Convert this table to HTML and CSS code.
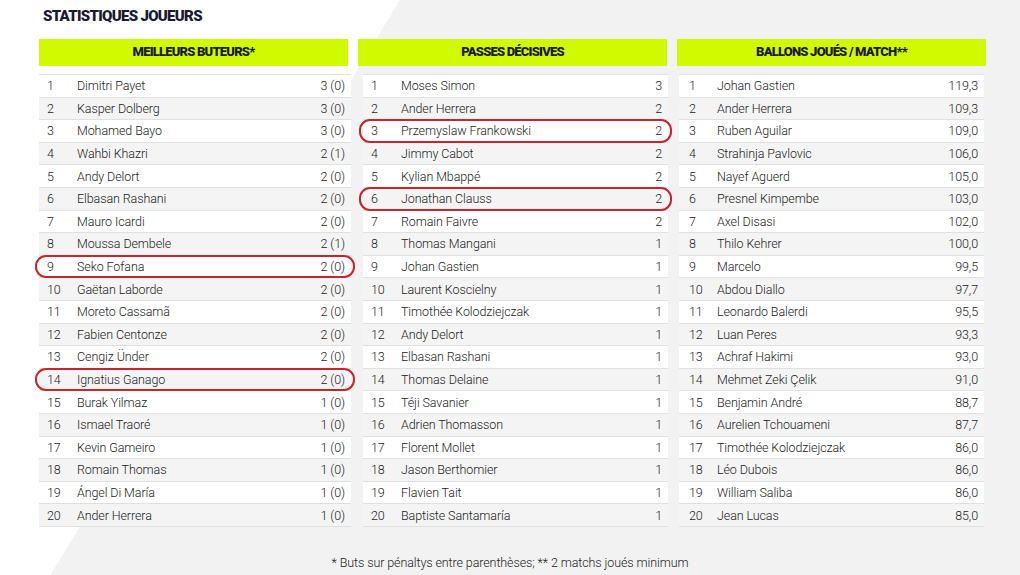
FILE: index.html
```html
<!DOCTYPE html>
<html lang="fr">
<head>
<meta charset="utf-8">
<title>Statistiques joueurs</title>
<link rel="stylesheet" href="styles.css">
</head>
<body>
<div class="page">
  <h1 class="title">STATISTIQUES JOUEURS</h1>
  <div class="tables">
    <section class="col col-1">
      <div class="head">MEILLEURS BUTEURS*</div>
      <ol class="rows">
        <li class="row"><span class="rk">1</span><span class="nm">Dimitri Payet</span><span class="val">3 (0)</span></li>
        <li class="row"><span class="rk">2</span><span class="nm">Kasper Dolberg</span><span class="val">3 (0)</span></li>
        <li class="row"><span class="rk">3</span><span class="nm">Mohamed Bayo</span><span class="val">3 (0)</span></li>
        <li class="row"><span class="rk">4</span><span class="nm">Wahbi Khazri</span><span class="val">2 (1)</span></li>
        <li class="row"><span class="rk">5</span><span class="nm">Andy Delort</span><span class="val">2 (0)</span></li>
        <li class="row"><span class="rk">6</span><span class="nm">Elbasan Rashani</span><span class="val">2 (0)</span></li>
        <li class="row"><span class="rk">7</span><span class="nm">Mauro Icardi</span><span class="val">2 (0)</span></li>
        <li class="row"><span class="rk">8</span><span class="nm">Moussa Dembele</span><span class="val">2 (1)</span></li>
        <li class="row mark"><span class="rk">9</span><span class="nm">Seko Fofana</span><span class="val">2 (0)</span></li>
        <li class="row"><span class="rk">10</span><span class="nm">Gaëtan Laborde</span><span class="val">2 (0)</span></li>
        <li class="row"><span class="rk">11</span><span class="nm">Moreto Cassamã</span><span class="val">2 (0)</span></li>
        <li class="row"><span class="rk">12</span><span class="nm">Fabien Centonze</span><span class="val">2 (0)</span></li>
        <li class="row"><span class="rk">13</span><span class="nm">Cengiz Ünder</span><span class="val">2 (0)</span></li>
        <li class="row mark"><span class="rk">14</span><span class="nm">Ignatius Ganago</span><span class="val">2 (0)</span></li>
        <li class="row"><span class="rk">15</span><span class="nm">Burak Yilmaz</span><span class="val">1 (0)</span></li>
        <li class="row"><span class="rk">16</span><span class="nm">Ismael Traoré</span><span class="val">1 (0)</span></li>
        <li class="row"><span class="rk">17</span><span class="nm">Kevin Gameiro</span><span class="val">1 (0)</span></li>
        <li class="row"><span class="rk">18</span><span class="nm">Romain Thomas</span><span class="val">1 (0)</span></li>
        <li class="row"><span class="rk">19</span><span class="nm">Ángel Di María</span><span class="val">1 (0)</span></li>
        <li class="row"><span class="rk">20</span><span class="nm">Ander Herrera</span><span class="val">1 (0)</span></li>
      </ol>
    </section>
    <section class="col col-2">
      <div class="head">PASSES DÉCISIVES</div>
      <ol class="rows">
        <li class="row"><span class="rk">1</span><span class="nm">Moses Simon</span><span class="val">3</span></li>
        <li class="row"><span class="rk">2</span><span class="nm">Ander Herrera</span><span class="val">2</span></li>
        <li class="row mark"><span class="rk">3</span><span class="nm">Przemyslaw Frankowski</span><span class="val">2</span></li>
        <li class="row"><span class="rk">4</span><span class="nm">Jimmy Cabot</span><span class="val">2</span></li>
        <li class="row"><span class="rk">5</span><span class="nm">Kylian Mbappé</span><span class="val">2</span></li>
        <li class="row mark"><span class="rk">6</span><span class="nm">Jonathan Clauss</span><span class="val">2</span></li>
        <li class="row"><span class="rk">7</span><span class="nm">Romain Faivre</span><span class="val">2</span></li>
        <li class="row"><span class="rk">8</span><span class="nm">Thomas Mangani</span><span class="val">1</span></li>
        <li class="row"><span class="rk">9</span><span class="nm">Johan Gastien</span><span class="val">1</span></li>
        <li class="row"><span class="rk">10</span><span class="nm">Laurent Koscielny</span><span class="val">1</span></li>
        <li class="row"><span class="rk">11</span><span class="nm">Timothée Kolodziejczak</span><span class="val">1</span></li>
        <li class="row"><span class="rk">12</span><span class="nm">Andy Delort</span><span class="val">1</span></li>
        <li class="row"><span class="rk">13</span><span class="nm">Elbasan Rashani</span><span class="val">1</span></li>
        <li class="row"><span class="rk">14</span><span class="nm">Thomas Delaine</span><span class="val">1</span></li>
        <li class="row"><span class="rk">15</span><span class="nm">Téji Savanier</span><span class="val">1</span></li>
        <li class="row"><span class="rk">16</span><span class="nm">Adrien Thomasson</span><span class="val">1</span></li>
        <li class="row"><span class="rk">17</span><span class="nm">Florent Mollet</span><span class="val">1</span></li>
        <li class="row"><span class="rk">18</span><span class="nm">Jason Berthomier</span><span class="val">1</span></li>
        <li class="row"><span class="rk">19</span><span class="nm">Flavien Tait</span><span class="val">1</span></li>
        <li class="row"><span class="rk">20</span><span class="nm">Baptiste Santamaría</span><span class="val">1</span></li>
      </ol>
    </section>
    <section class="col col-3">
      <div class="head">BALLONS JOUÉS / MATCH**</div>
      <ol class="rows">
        <li class="row"><span class="rk">1</span><span class="nm">Johan Gastien</span><span class="val">119,3</span></li>
        <li class="row"><span class="rk">2</span><span class="nm">Ander Herrera</span><span class="val">109,3</span></li>
        <li class="row"><span class="rk">3</span><span class="nm">Ruben Aguilar</span><span class="val">109,0</span></li>
        <li class="row"><span class="rk">4</span><span class="nm">Strahinja Pavlovic</span><span class="val">106,0</span></li>
        <li class="row"><span class="rk">5</span><span class="nm">Nayef Aguerd</span><span class="val">105,0</span></li>
        <li class="row"><span class="rk">6</span><span class="nm">Presnel Kimpembe</span><span class="val">103,0</span></li>
        <li class="row"><span class="rk">7</span><span class="nm">Axel Disasi</span><span class="val">102,0</span></li>
        <li class="row"><span class="rk">8</span><span class="nm">Thilo Kehrer</span><span class="val">100,0</span></li>
        <li class="row"><span class="rk">9</span><span class="nm">Marcelo</span><span class="val">99,5</span></li>
        <li class="row"><span class="rk">10</span><span class="nm">Abdou Diallo</span><span class="val">97,7</span></li>
        <li class="row"><span class="rk">11</span><span class="nm">Leonardo Balerdi</span><span class="val">95,5</span></li>
        <li class="row"><span class="rk">12</span><span class="nm">Luan Peres</span><span class="val">93,3</span></li>
        <li class="row"><span class="rk">13</span><span class="nm">Achraf Hakimi</span><span class="val">93,0</span></li>
        <li class="row"><span class="rk">14</span><span class="nm">Mehmet Zeki Çelik</span><span class="val">91,0</span></li>
        <li class="row"><span class="rk">15</span><span class="nm">Benjamin André</span><span class="val">88,7</span></li>
        <li class="row"><span class="rk">16</span><span class="nm">Aurelien Tchouameni</span><span class="val">87,7</span></li>
        <li class="row"><span class="rk">17</span><span class="nm">Timothée Kolodziejczak</span><span class="val">86,0</span></li>
        <li class="row"><span class="rk">18</span><span class="nm">Léo Dubois</span><span class="val">86,0</span></li>
        <li class="row"><span class="rk">19</span><span class="nm">William Saliba</span><span class="val">86,0</span></li>
        <li class="row"><span class="rk">20</span><span class="nm">Jean Lucas</span><span class="val">85,0</span></li>
      </ol>
    </section>
  </div>
  <p class="note">* Buts sur pénaltys entre parenthèses; ** 2 matchs joués minimum</p>
</div>
</body>
</html>
```
FILE: styles.css
```css
html, body {
  margin: 0;
  padding: 0;
}
body {
  width: 1020px;
  height: 575px;
  overflow: hidden;
  font-family: Roboto, "Liberation Sans", sans-serif;
  color: #1c1c1c;
  background: linear-gradient(121.3deg, #ffffff 29.2%, #f2f2f2 29.2%);
}
.page {
  padding: 8px 0 0 39px;
}
.title {
  margin: 0 0 0 4px;
  font-size: 15px;
  line-height: 17px;
  font-weight: 900;
  letter-spacing: -0.7px;
  color: #1a1a30;
}
.tables {
  margin-top: 14px;
  display: grid;
  grid-template-columns: 309px 309px 309px;
  column-gap: 10px;
}
.head {
  height: 27px;
  box-sizing: border-box;
  padding-bottom: 3px;
  background: #d1fa00;
  display: flex;
  align-items: center;
  justify-content: center;
  font-size: 13px;
  font-weight: 900;
  letter-spacing: -0.8px;
  color: #1a1a30;
}
.rows {
  list-style: none;
  margin: 8px 0 0 0;
  padding: 0;
  border-top: 1px solid #e0e0e0;
}
.col-1 .rows { margin-right: -3px; }
.col-2 .rows { margin-left: 5px; margin-right: -1px; }
.col-3 .rows { margin-left: 2px; margin-right: 2px; }
.row {
  position: relative;
  height: 21.6px;
  border-bottom: 1px solid #e0e0e0;
  display: grid;
  grid-template-columns: 30px 1fr auto;
  align-items: center;
  padding: 0 6px 0 8px;
  font-size: 12.5px;
  font-weight: 300;
  letter-spacing: -0.1px;
  background: #ffffff;
}
.row:nth-child(even) {
  background: #f4f4f4;
}
.col-3 .row .rk { padding-left: 2px; }
.mark::after {
  content: "";
  position: absolute;
  top: -1px;
  bottom: -1px;
  left: -4px;
  right: -4px;
  border: 2.5px solid #c4262e;
  border-radius: 11px;
}
.note {
  margin: 28px 0 0 -39px;
  text-align: center;
  font-size: 12.5px;
  font-weight: 300;
  letter-spacing: -0.1px;
  color: #1c1c1c;
}
```
